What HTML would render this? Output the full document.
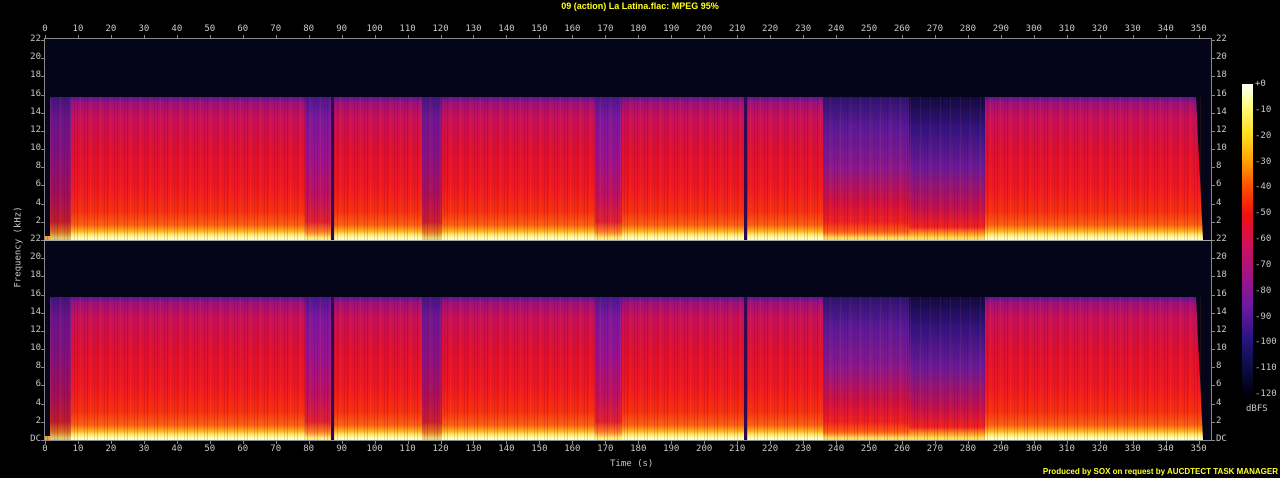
<!DOCTYPE html>
<html><head><style>
body{margin:0;width:1280px;height:478px;background:#000;position:relative;overflow:hidden;font-family:"DejaVu Sans Mono","Liberation Mono",monospace;font-size:9px;color:#c8c8c8}
.t{position:absolute;white-space:nowrap}
.ch{position:absolute;left:45px;width:1166px;background:#05051a;overflow:hidden}
.s{position:absolute;bottom:0}
.red{background:linear-gradient(to bottom,#5a1898 0px,#a0107a 6px,#c8105a 20px,#e01030 55px,#f01820 90px,#f83010 115px,#fc6010 128px,#ffb020 134px,#fff070 138px,#ffffc0 141px)}
.pur{background:linear-gradient(to bottom,#4a1890 0px,#7a18a0 20px,#9a1290 60px,#c01060 100px,#e02030 125px,#ff8020 135px,#fff080 141px)}
.blu{background:linear-gradient(to bottom,#2a1470 0px,#5a1a9a 30px,#8a1890 70px,#d01040 105px,#f02020 125px,#ff6010 135px,#ffe060 141px)}
.drk{background:linear-gradient(to bottom,#100a40 0px,#301480 30px,#6a1a9a 70px,#c01050 110px,#f02020 130px,#ffa020 137px,#ffe060 141px)}
.stripe{position:absolute;left:0;right:8px;bottom:0;height:143px;background:repeating-linear-gradient(90deg,rgba(0,0,0,0) 0 2px,rgba(60,0,80,.2) 2px 3px,rgba(0,0,0,0) 3px 5px,rgba(255,120,40,.1) 5px 6px,rgba(0,0,0,0) 6px 9px,rgba(80,0,60,.15) 9px 10px)}
.ax{position:absolute;background:#888}
</style></head><body>
<div class="t" style="left:0;width:1280px;text-align:center;top:1px;color:#ffff20;font-weight:bold;font-family:'Liberation Sans',sans-serif;font-size:9px">09 (action) La Latina.flac: MPEG 95%</div>

<div class="ch" style="top:39px;height:201px">
 <div class="s" style="left:0;width:5px;height:4px;background:#ffa030"></div>
 <div class="s pur" style="left:5px;width:21px;height:143px;opacity:.85"></div>
 <div class="s red" style="left:26px;width:234px;height:143px"></div>
 <div class="s pur" style="left:260px;width:27px;height:143px"></div>
 <div class="s" style="left:286px;width:3px;height:143px;background:#300a50"></div>
 <div class="s red" style="left:289px;width:88px;height:143px"></div>
 <div class="s pur" style="left:377px;width:20px;height:143px;opacity:.9"></div>
 <div class="s red" style="left:397px;width:153px;height:143px"></div>
 <div class="s pur" style="left:550px;width:27px;height:143px"></div>
 <div class="s red" style="left:577px;width:122px;height:143px"></div>
 <div class="s" style="left:699px;width:3px;height:143px;background:#300a50"></div>
 <div class="s red" style="left:702px;width:76px;height:143px"></div>
 <div class="s blu" style="left:778px;width:86px;height:143px"></div>
 <div class="s drk" style="left:864px;width:76px;height:143px"></div>
 <div class="s red" style="left:940px;width:208px;height:143px"></div>
 <div class="s red" style="left:1148px;width:10px;height:143px;clip-path:polygon(0 0,30% 0,100% 100%,0 100%)"></div>
 <div class="stripe"></div>
</div>
<div class="ch" style="top:240px;height:200px">
 <div class="s" style="left:0;width:5px;height:4px;background:#ffa030"></div>
 <div class="s pur" style="left:5px;width:21px;height:143px;opacity:.85"></div>
 <div class="s red" style="left:26px;width:234px;height:143px"></div>
 <div class="s pur" style="left:260px;width:27px;height:143px"></div>
 <div class="s" style="left:286px;width:3px;height:143px;background:#300a50"></div>
 <div class="s red" style="left:289px;width:88px;height:143px"></div>
 <div class="s pur" style="left:377px;width:20px;height:143px;opacity:.9"></div>
 <div class="s red" style="left:397px;width:153px;height:143px"></div>
 <div class="s pur" style="left:550px;width:27px;height:143px"></div>
 <div class="s red" style="left:577px;width:122px;height:143px"></div>
 <div class="s" style="left:699px;width:3px;height:143px;background:#300a50"></div>
 <div class="s red" style="left:702px;width:76px;height:143px"></div>
 <div class="s blu" style="left:778px;width:86px;height:143px"></div>
 <div class="s drk" style="left:864px;width:76px;height:143px"></div>
 <div class="s red" style="left:940px;width:208px;height:143px"></div>
 <div class="s red" style="left:1148px;width:10px;height:143px;clip-path:polygon(0 0,30% 0,100% 100%,0 100%)"></div>
 <div class="stripe"></div>
</div>

<div class="ax" style="left:44px;top:38px;width:1168px;height:1px"></div>
<div class="ax" style="left:44px;top:440px;width:1168px;height:1px"></div>
<div class="ax" style="left:44px;top:38px;width:1px;height:403px"></div>
<div class="ax" style="left:1211px;top:38px;width:1px;height:403px"></div>
<div class="ax" style="left:44px;top:240px;width:1168px;height:1px;background:#aaa"></div>

<div id="lab"></div>
<div class="t" style="left:610px;top:459px">Time (s)</div>
<div class="t" style="left:-22px;top:242px;transform:rotate(-90deg);transform-origin:center">Frequency (kHz)</div>

<div style="position:absolute;left:1242px;top:84px;width:11px;height:310px;background:linear-gradient(to bottom,#ffffff 0%,#ffff90 6%,#ffe020 16%,#ffa000 25%,#ff5000 33%,#f01010 42%,#d0105a 52%,#a01488 62%,#6a1aa0 72%,#2a1480 82%,#0c0c40 92%,#000010 100%)"></div>
<div class="t" style="left:1246px;top:404px">dBFS</div>
<div class="t" style="right:2px;top:467px;color:#ffff20;font-weight:bold;font-family:'Liberation Sans',sans-serif;font-size:8px">Produced by SOX on request by AUCDTECT TASK MANAGER</div>

<script>
var h='';
for(var t=0;t<=350;t+=10){var x=45+t*3.296;
h+='<div class="t" style="left:'+(x-15)+'px;width:30px;text-align:center;top:24px">'+t+'</div>';
h+='<div class="t" style="left:'+(x-15)+'px;width:30px;text-align:center;top:444px">'+t+'</div>';
h+='<div class="ax" style="left:'+Math.round(x)+'px;top:35px;width:1px;height:3px"></div>';
h+='<div class="ax" style="left:'+Math.round(x)+'px;top:441px;width:1px;height:3px"></div>';}
for(var c=0;c<2;c++){var base=c?440:240;
for(var f=(c?0:2);f<=22;f+=2){var y=base-f*(200/22);var lb=(f==0)?'DC':f;
h+='<div class="t" style="left:0;width:41px;text-align:right;top:'+(y-6)+'px">'+lb+'</div>';
h+='<div class="t" style="left:1216px;top:'+(y-6)+'px">'+lb+'</div>';
h+='<div class="ax" style="left:41px;top:'+Math.round(y)+'px;width:3px;height:1px"></div>';
h+='<div class="ax" style="left:1212px;top:'+Math.round(y)+'px;width:3px;height:1px"></div>';}}
var db=['+0','-10','-20','-30','-40','-50','-60','-70','-80','-90','-100','-110','-120'];
for(var i=0;i<13;i++){var y=84+i*(310/12);
h+='<div class="t" style="left:1255px;top:'+(y-5)+'px">'+db[i]+'</div>';}
document.getElementById('lab').innerHTML=h;
</script>
</body></html>
